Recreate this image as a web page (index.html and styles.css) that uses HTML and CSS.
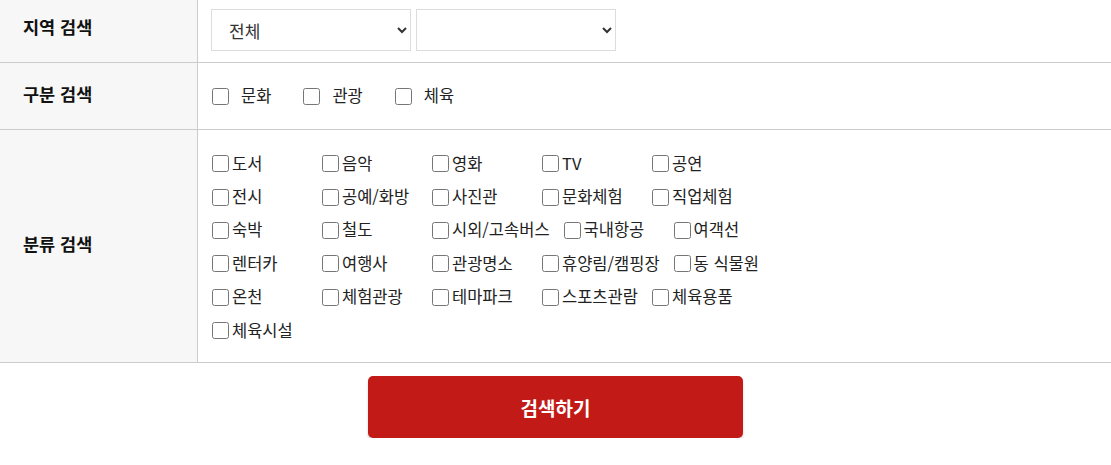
FILE: index.html
```html
<!DOCTYPE html>
<html lang="ko">
<head>
    <meta charset="UTF-8">
    <meta name="viewport" content="width=device-width, initial-scale=1.0">
    <title>검색</title>
    <link rel="stylesheet" href="styles.css">
</head>
<body>
    <div class="search-box">
        <div class="row row-area">
            <div class="th">지역 검색</div>
            <div class="td">
                <div class="select-group">
                    <select class="sel">
                        <option>전체</option>
                    </select>
                    <select class="sel">
                        <option></option>
                    </select>
                </div>
            </div>
        </div>
        <div class="row row-type">
            <div class="th">구분 검색</div>
            <div class="td">
                <label class="type-item"><input type="checkbox"><span>문화</span></label>
                <label class="type-item"><input type="checkbox"><span>관광</span></label>
                <label class="type-item"><input type="checkbox"><span>체육</span></label>
            </div>
        </div>
        <div class="row row-cat">
            <div class="th">분류 검색</div>
            <div class="td">
                <div class="cat-list" id="cat_list"></div>
            </div>
        </div>
    </div>
    <div class="btn-wrap">
        <button class="btn-search">검색하기</button>
    </div>
    <script>
        var CATEGORY = ['도서', '음악', '영화', 'TV', '공연',
            '전시', '공예/화방', '사진관', '문화체험', '직업체험',
            '숙박', '철도', '시외/고속버스', '국내항공', '여객선',
            '렌터카', '여행사', '관광명소', '휴양림/캠핑장', '동 식물원',
            '온천', '체험관광', '테마파크', '스포츠관람', '체육용품',
            '체육시설'];
        var cat_list = document.getElementById('cat_list');
        for(var i = 0; i < CATEGORY.length; i++){
            cat_list.innerHTML += '<label class="cat-item"><input type="checkbox"><span>' + CATEGORY[i] + '</span></label>';
        }
    </script>
</body>
</html>
```

FILE: styles.css
```css
body, html{
    margin: 0;
    background-color: #fff;
}
body{
    font-family: "Noto Sans CJK KR", "Noto Sans", sans-serif;
    color: #222;
    font-size: 16.5px;
}
.search-box{
    /* top of the table is cut off in the view */
    margin-top: -3px;
}
.row{
    display: flex;
    border-bottom: 1px solid #cccccc;
}
.row-area{
    height: 65px;
}
.row-type{
    height: 66px;
}
.row-cat{
    height: 232px;
}
.th{
    flex: none;
    width: 198px;
    box-sizing: border-box;
    padding-left: 23px;
    background-color: #f7f7f7;
    border-right: 1px solid #cccccc;
    display: flex;
    align-items: center;
    font-size: 17.5px;
    font-weight: bold;
    color: #111;
    padding-bottom: 6px;
}
.td{
    flex: 1;
    display: flex;
    align-items: center;
    padding-left: 13px;
}
.select-group{
    display: flex;
    gap: 5px;
    margin-top: 1px;
}
.sel{
    width: 200px;
    height: 42px;
    border: 1px solid #dddddd;
    border-radius: 0;
    background-color: #fff;
    color: #333;
    font-family: "Noto Sans CJK KR", "Noto Sans", sans-serif;
    font-size: 17px;
    padding: 0 8px 0 13px;
    outline: none;
}
input[type="checkbox"]{
    width: 17px;
    height: 17px;
    margin: 0;
    flex: none;
}
.type-item{
    display: flex;
    align-items: center;
    margin-left: 1px;
    margin-right: 31px;
    padding-bottom: 2px;
}
.type-item input{
    margin-right: 12px;
    margin-top: 2px;
}
.row-cat .td{
    align-items: flex-start;
    padding-top: 17px;
    box-sizing: border-box;
}
.cat-list{
    display: flex;
    flex-wrap: wrap;
    width: 600px;
    margin-left: 1px;
}
.cat-item{
    display: flex;
    align-items: center;
    height: 33.4px;
    min-width: 96px;
    margin-right: 14px;
    white-space: nowrap;
}
.cat-item span{
    margin-bottom: 2px;
}
.cat-item input{
    margin-right: 3px;
}
.btn-wrap{
    padding-top: 13px;
}
.btn-search{
    display: block;
    margin: 0 auto;
    width: 375px;
    height: 62px;
    border: 0;
    border-radius: 5px;
    background-color: #c21a17;
    box-shadow: 0 3px 3px rgba(0, 0, 0, 0.15);
    color: #fff;
    font-family: "Noto Sans CJK KR", "Noto Sans", sans-serif;
    font-size: 19px;
    font-weight: bold;
    cursor: pointer;
}
```
